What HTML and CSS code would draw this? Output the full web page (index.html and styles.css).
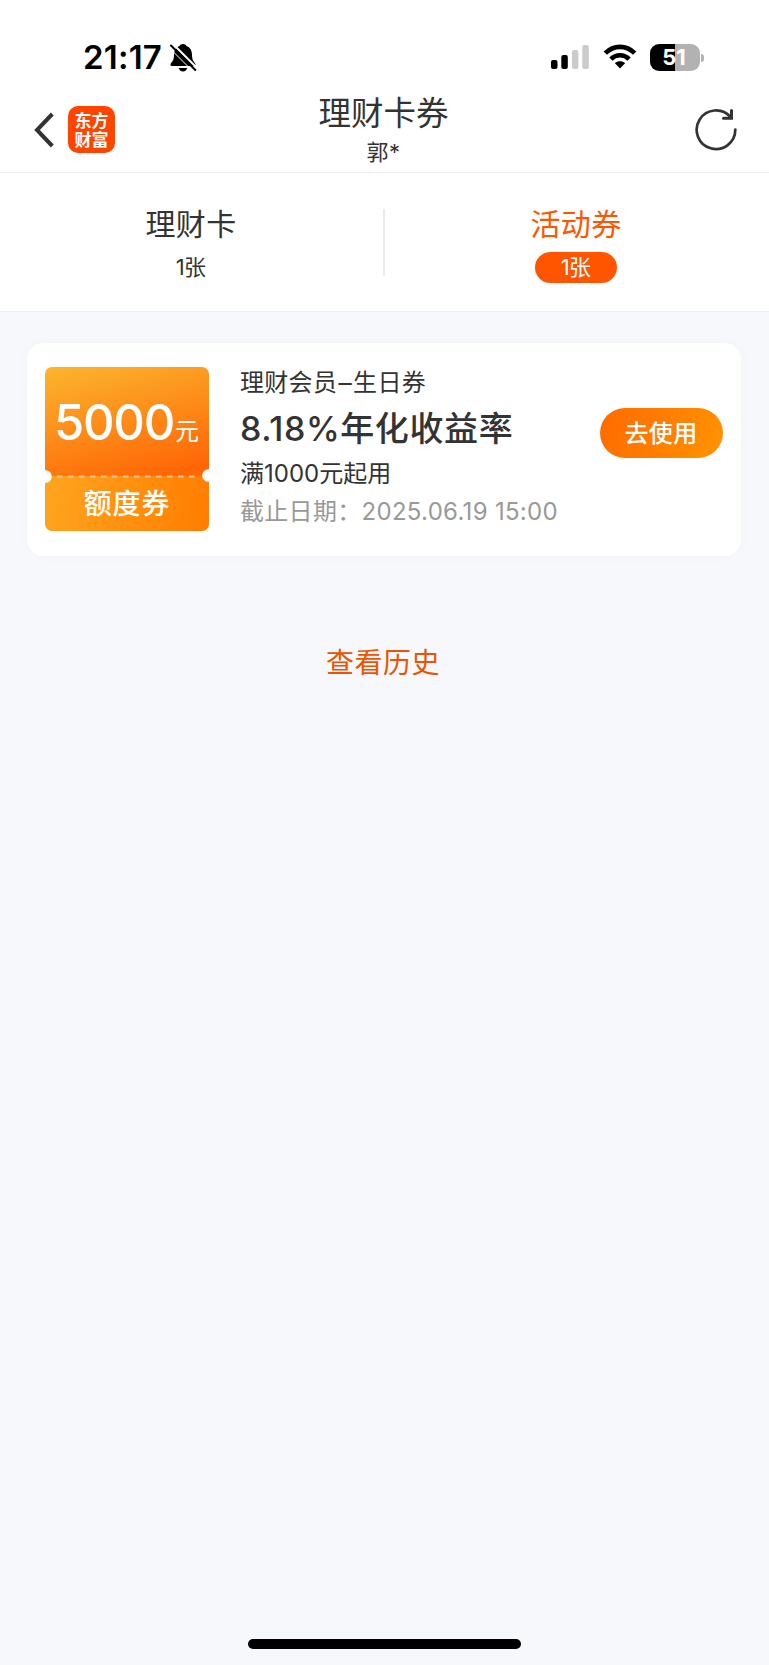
FILE: index.html
```html
<!DOCTYPE html>
<html lang="zh-CN">
<head>
<meta charset="utf-8">
<title>理财卡券</title>
<link rel="stylesheet" href="styles.css">
</head>
<body>
<div class="status">
  <div class="status-left">
    <span class="clock">21:17</span>
    <svg class="bell" width="28" height="30" viewBox="0 0 28 30">
      <path d="M14 1C11.800 1 10.800 2 10.500 3.100C6.800 4.500 5 7.600 5 11.500C5 17 3.500 18.300 2 20.200C1 21.600 1.300 23 3 23H25C26.700 23 27 21.600 26 20.200C24.500 18.300 23 17 23 11.500C23 7.600 21.200 4.500 17.500 3.100C17.200 2 16.200 1 14 1Z"/>
      <path d="M9.700 25H18.300C17.500 27.400 16 28.500 14 28.500S10.500 27.400 9.700 25Z"/>
      <path d="M3.500 .500L28 25" stroke="#fff" stroke-width="2"/>
      <path d="M2 2.500L26.300 27" stroke="#000" stroke-width="2" stroke-linecap="round"/>
      <path d="M0 4.500L24 28.500" stroke="#fff" stroke-width="1"/>
    </svg>
  </div>
  <div class="status-right">
    <svg width="38" height="24" viewBox="0 0 38 24">
      <rect x="0" y="15" width="6.500" height="9" rx="2"/>
      <rect x="10.300" y="10" width="6.500" height="14" rx="2"/>
      <rect x="20.900" y="5" width="6.500" height="19" rx="2" fill="#cbcbcb"/>
      <rect x="31.300" y="0" width="6.500" height="24" rx="2" fill="#cbcbcb"/>
    </svg>
    <svg class="wifi" width="34" height="25" viewBox="0 0 34 25">
      <g fill="none" stroke="#000" stroke-width="4.600">
        <path d="M2.300 9.200C10.500 .700 23.500 .700 31.700 9.200"/>
        <path d="M7.900 15.100C13 10 21 10 26.100 15.100"/>
      </g>
      <path d="M17 24.500L11.900 19.300C14.800 16.700 19.200 16.700 22.100 19.300Z"/>
    </svg>
    <div class="battery"><span>51</span></div>
    <i class="battery-tip"></i>
  </div>
</div>
<header class="nav">
  <svg class="back" width="22" height="38" viewBox="0 0 22 38"><path d="M19.300 3L4 19L19.300 35" fill="none" stroke="#333" stroke-width="4"/></svg>
  <div class="logo">东方财富</div>
  <div class="heading"><h1>理财卡券</h1><p>郭*</p></div>
  <svg class="refresh" width="44" height="44" viewBox="0 0 44 44">
    <g fill="none" stroke="#333" stroke-width="2.700" stroke-linecap="round">
      <path d="M41.300 21.500A19.300 19.300 0 1 1 36.500 9"/>
      <path d="M37.500 2.500V10.300H29.500" stroke-width="3"/>
    </g>
  </svg>
</header>
<nav class="tabs">
  <div class="tab"><b>理财卡</b><span>1张</span></div>
  <i class="rule"></i>
  <div class="tab active"><b>活动券</b><span>1张</span></div>
</nav>
<main>
  <section class="card">
    <div class="ticket">
      <div class="amount">5000<small>元</small></div>
      <svg class="perforation" width="164" height="14" viewBox="0 0 164 14">
        <path d="M12 7.500H150" stroke="#ffc596" stroke-width="2" stroke-dasharray="5.500 5.500"/>
        <circle cx=".500" cy="7.500" r="6.300" fill="#fff"/>
        <circle cx="163.500" cy="6.500" r="6.300" fill="#fff"/>
      </svg>
      <div class="kind">额度券</div>
    </div>
    <div class="details">
      <p class="name">理财会员<i>–</i>生日券</p>
      <p class="rate"><span>8.18%</span>年化收益率</p>
      <p class="condition">满<span>1000</span>元起用</p>
      <p class="expiry">截止日期：<span>2025.06.19 15:00</span></p>
    </div>
    <div class="use">去使用</div>
  </section>
  <div class="history">查看历史</div>
</main>
<div class="home"></div>
</body>
</html>
```

FILE: styles.css
```css
* { box-sizing: border-box; margin: 0; padding: 0; }
body { width: 769px; height: 1665px; display: flex; flex-direction: column; background: #f6f8fb; color: #333; font-family: Inter, "Noto Sans CJK SC", sans-serif; overflow: hidden; }
svg { display: block; flex: none; }
i { font-style: normal; }
.status { height: 88px; flex: none; display: flex; justify-content: space-between; align-items: flex-start; padding: 43px 65px 0 83px; background: #fff; color: #000; }
.status-left, .status-right { display: flex; }
.clock { width: 86px; font-size: 33px; line-height: 29px; font-weight: 600; letter-spacing: .2px; white-space: nowrap; }
.status-right { padding-top: 1px; }
.status-right > svg:first-child { margin-top: 1px; }
.wifi { margin: 0 13px 0 14px; }
.battery { width: 50px; height: 27px; border-radius: 9px; background: linear-gradient(90deg, #000 0 25.500px, #b2b2b2 25.500px); color: #fff; font-size: 22px; line-height: 27px; font-weight: 700; text-align: center; padding-right: 2px; }
.battery-tip { width: 3px; height: 8px; margin: 10px 0 0 1px; border-radius: 0 4px 4px 0; background: #b2b2b2; }
.nav { height: 85px; flex: none; display: flex; background: #fff; border-bottom: 1px solid #eee; padding: 0 31px 0 33px; }
.back { margin: 23px 14px 0 0; }
.logo { width: 47px; height: 47px; flex: none; margin: 18px 0 0 -1px; padding: 4px 6px; border-radius: 10px; background: #ff4400; color: #fff; font: 700 17px/19px "Noto Sans CJK SC", sans-serif; text-align: center; word-break: break-all; }
.heading { flex: 1; text-align: center; padding-right: 42px; }
.heading h1 { font-size: 32.5px; line-height: 51px; font-weight: 400; }
.heading p { font-size: 22px; line-height: 27px; letter-spacing: .6px; }
.refresh { margin-top: 20px; }
.tabs { height: 139px; flex: none; display: flex; background: #fff; border-bottom: 1px solid #f0f0f1; }
.tab { flex: 1; display: flex; flex-direction: column; align-items: center; padding-top: 30px; }
.tab:first-child, .tab:last-child { padding-right: 2px; }
.tab b { font-size: 30px; line-height: 42px; font-weight: 400; letter-spacing: .4px; }
.tab span { width: 82px; height: 31px; margin-top: 7px; border-radius: 16px; font-size: 22px; line-height: 31px; letter-spacing: -.6px; padding-right: 1px; text-align: center; }
.active b { color: #ff5500; }
.active span { background: #ff5500; color: #fff; }
.rule { width: 2px; height: 67px; margin: 36px 0 0 -1px; background: #ebebeb; }
main { flex: 1; padding: 31px 28px 0 27px; }
.card { height: 213px; display: flex; padding: 24px 18px; border-radius: 16px; background: #fff; box-shadow: 0 0 14px rgba(0, 0, 0, .025); }
.ticket { position: relative; width: 164px; height: 164px; flex: none; border-radius: 7px; overflow: hidden; background: linear-gradient(165deg, #fbb62f, #ff6605 92%); background-size: 164px 109px; background-repeat: no-repeat; color: #fff; }
.amount { height: 109px; padding: 26px 0 0 9px; font-size: 49px; line-height: 60px; font-weight: 450; white-space: nowrap; letter-spacing: -1.300px; }
.amount small { font-size: 24px; font-weight: 400; letter-spacing: 0; margin-left: 1px; }
.perforation { position: absolute; left: 0; top: 102px; }
.kind { height: 55px; font-size: 28px; line-height: 57px; font-weight: 500; letter-spacing: .8px; text-align: center; background: linear-gradient(100deg, #ffa51f, #ff7d00); }
.details { width: 359px; padding-left: 31px; flex: none; white-space: nowrap; }
.name { font-size: 24px; line-height: 32px; letter-spacing: .3px; }
.name i { display: inline-block; transform: scaleX(1.1); margin: 0 1.800px; }
.rate { font-size: 34px; line-height: 44px; margin-top: 8px; font-weight: 500; letter-spacing: .6px; }
.condition { font-size: 24px; line-height: 32px; margin-top: 7px; }
.expiry { font-size: 24px; line-height: 32px; margin-top: 6px; color: #999; letter-spacing: .3px; }
.use { width: 123px; height: 50px; margin: 41px 0 0 32px; flex: none; border-radius: 25px; background: linear-gradient(110deg, #ff6a00, #ff9400); color: #fff; font-size: 24px; line-height: 51px; font-weight: 500; letter-spacing: .3px; text-align: center; padding-right: 1px; }
.history { margin-top: 85px; padding-right: 2px; font-size: 28px; line-height: 44px; letter-spacing: .5px; text-align: center; color: #e95504; }
.home { width: 273px; height: 10px; flex: none; margin: 0 auto 16px; border-radius: 5px; background: #000; }
```
